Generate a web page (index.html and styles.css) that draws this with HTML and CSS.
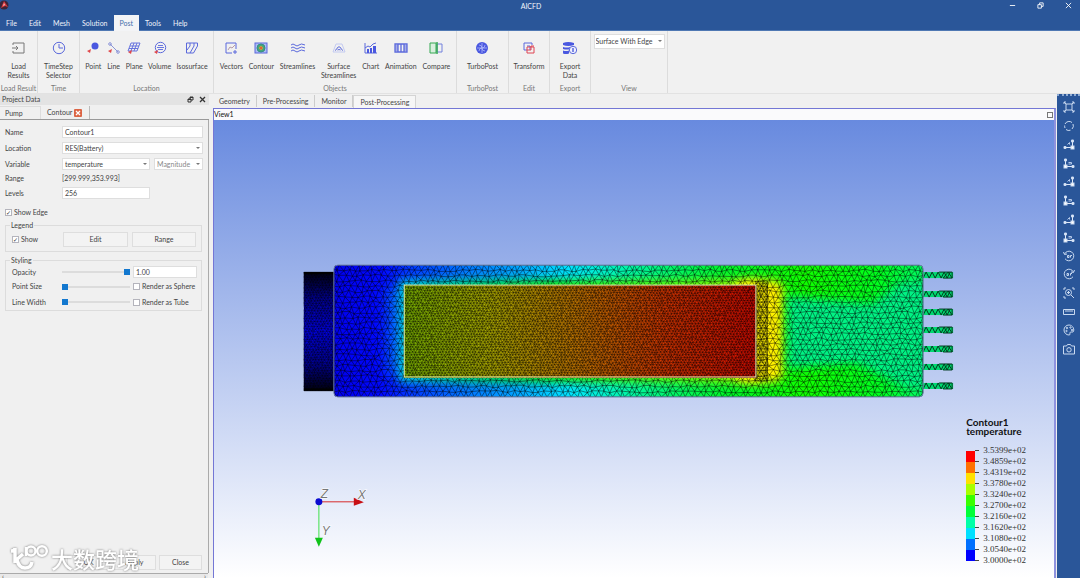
FILE: index.html
```html
<!DOCTYPE html>
<html lang="en">
<head>
<meta charset="utf-8">
<title>AICFD</title>
<link rel="stylesheet" href="styles.css">
</head>
<body>
<svg class="defs" aria-hidden="true">
  <symbol id="axis-r" viewBox="0 0 12 12"><path d="M9.500 2v7.500H2" fill="none" stroke="#dfe9f8"/><path d="M8.500 2h2v2h-2zM1 8.500h2v2H1z" fill="#e8f0fb"/><rect x="8" y="8" width="3" height="3" fill="#fff"/><path d="M4.500 6.500l2-2v2" fill="none" stroke="#b4c9ea"/></symbol>
  <symbol id="axis-l" viewBox="0 0 12 12"><path d="M2.500 2v7.500H10" fill="none" stroke="#dfe9f8"/><path d="M1.500 2h2v2h-2zM9 8.500h2v2H9z" fill="#e8f0fb"/><rect x="1" y="8" width="3" height="3" fill="#fff"/><path d="M5.500 5.500h3v1.500h-3" fill="none" stroke="#b4c9ea"/></symbol>
</svg>

<header class="titlebar">
  <svg class="app-icon" viewBox="0 0 10 10"><circle cx="4" cy="5" r="4.500" fill="#3d2436"/><path d="M1 8 4 1l4 6-3-1z" fill="#d93a3f"/><path d="M3 6l1-3 1 2z" fill="#f4c6c8"/></svg>
  <h1 class="app-title">AICFD</h1>
  <div class="window-buttons">
    <button aria-label="Minimize"><svg viewBox="0 0 8 8"><path d="M1 4h6"/></svg></button>
    <button aria-label="Restore"><svg viewBox="0 0 8 8"><path d="M1 3h4v4H1zM3 3V1h4v4H5"/></svg></button>
    <button aria-label="Close"><svg viewBox="0 0 8 8"><path d="M1 1l6 6M7 1 1 7"/></svg></button>
  </div>
</header>
<nav class="menu">
  <a href="#file">File</a><a href="#edit">Edit</a><a href="#mesh">Mesh</a><a href="#solution">Solution</a><a href="#post" class="active">Post</a><a href="#tools">Tools</a><a href="#help">Help</a>
</nav>

<div class="ribbon">
  <section class="group g-load">
    <div class="tools"><button><svg viewBox="0 0 14 14"><path d="M2 4V2h11v10H2v-2M1 7h6M5 5l2 2-2 2" stroke="#777"/></svg>Load<br>Results</button></div>
    <h2>Load Result</h2>
  </section>
  <section class="group g-time">
    <div class="tools"><button><svg viewBox="0 0 14 14"><circle cx="7" cy="7" r="5.700"/><path d="M7 3v4h4"/></svg>TimeStep<br>Selector</button></div>
    <h2>Time</h2>
  </section>
  <section class="group g-location">
    <div class="tools">
      <button><svg viewBox="0 0 14 14"><circle cx="9" cy="5" r="3.500" fill="#4a58e0" stroke="none"/><path d="M1 10l4-2-1 4z" class="red"/></svg>Point</button>
      <button><svg viewBox="0 0 14 14"><path d="M3 3l8 8" stroke="#8b94d8"/><circle cx="3" cy="3" r="1.300" stroke="#8b94d8"/><circle cx="11" cy="11" r="1.300" stroke="#8b94d8"/><path d="M1 10l4-2-1 4z" class="red"/></svg>Line</button>
      <button><svg viewBox="0 0 14 14"><path d="M4 2h9l-3 8H1zM3 5h9M2 7.500h9M7 2l-3 8M10 2l-3 8" stroke-width=".9"/><path d="M1 11l4-2-1 4z" class="red"/></svg>Plane</button>
      <button><svg viewBox="0 0 14 14"><circle cx="7.500" cy="6.500" r="5.200"/><path d="M5 4.500h5M4 6.500h7M5 8.500h5" stroke-width=".9"/><path d="M1 11l4-2-1 4z" class="red"/></svg>Volume</button>
      <button><svg viewBox="0 0 14 14"><path d="M1.500 2h11v3l-4 7h-7zM5 2v3l-3 4M9 2v3l-4 7"/></svg>Isosurface</button>
    </div>
    <h2>Location</h2>
  </section>
  <section class="group g-objects">
    <div class="tools">
      <button><svg viewBox="0 0 14 14"><path d="M8 12H2V2h10v6M11 9v4M9 11h4"/><path d="M4 9l2-3 2 1 3-3" stroke="#b59aa8"/></svg>Vectors</button>
      <button><svg viewBox="0 0 14 14"><rect x="1" y="2" width="12" height="10" fill="#aebcf5"/><circle cx="7" cy="7" r="4" fill="#47a67a" stroke="#358f84"/><circle cx="7" cy="7" r="1.500" fill="#e54b35" stroke="#c9a145"/></svg>Contour</button>
      <button><svg viewBox="0 0 14 14"><path d="M0 4q2-2 4 0t4 0 6 0M0 7q2-2 4 0t4 0 6 0M0 10q2-2 4 0t4 0 6 0"/></svg>Streamlines</button>
      <button><svg viewBox="0 0 14 14"><path d="M4 3h6l3 8H1z" stroke="#c4cbf1"/><path d="M3 9.500q2-1 2.500-3 1.500-1.500 3 0 .5 2 2.500 3M5.500 9q1.500-1 3 0"/></svg>Surface<br>Streamlines</button>
      <button><svg viewBox="0 0 14 14"><path d="M1 2v10h12M1 7l3-2 2 1 3-3 3-1"/><path d="M3 8h2v4H3zM6 7h2v5H6zM9 5h3v7H9z" fill="#4a58e0" stroke="none"/></svg>Chart</button>
      <button><svg viewBox="0 0 14 14"><path d="M1 3h12v8H1zM4 3v8M10 3v8M7 3v8" stroke-width="1.300"/><path d="M1 5h3M1 7h3M1 9h3M10 5h3M10 7h3M10 9h3"/></svg>Animation</button>
      <button><svg viewBox="0 0 14 14"><path d="M8 3h5v8H8z" stroke="#7281dd"/><path d="M1 2h6v10H1z" fill="#d8efdd" stroke="#35a852"/><path d="M8 1v12" stroke="#35a852" stroke-width="1.500"/></svg>Compare</button>
    </div>
    <h2>Objects</h2>
  </section>
  <section class="group g-turbo">
    <div class="tools"><button><svg viewBox="0 0 14 14"><circle cx="7" cy="7" r="6" fill="#4a58e0" stroke="none"/><path d="M7 2v10M2 7h10M4 4q3 0 3 3t3 3M10 4q0 3-3 3t-3 3" stroke="#aeb6fa" stroke-width=".8"/></svg>TurboPost</button></div>
    <h2>TurboPost</h2>
  </section>
  <section class="group g-edit">
    <div class="tools"><button><svg viewBox="0 0 14 14"><path d="M5 9H2V2h8v2M5 5h3v4"/><path d="M5 6h7v6H5zM5 9h4V5h3" stroke="#df4552"/></svg>Transform</button></div>
    <h2>Edit</h2>
  </section>
  <section class="group g-export">
    <div class="tools"><button><svg viewBox="0 0 14 14"><path d="M0 2q5-2 11 0v2Q5 6 0 4zM0 6q4 1 7 0v2q-3 1-7 0zM0 9.500q3 1 6 0v3q-3 1-6 0z" fill="#4a58e0" stroke="none"/><circle cx="10" cy="9" r="3.700" fill="#eef0ff"/><path d="M10 7v4M9 8h2M9 10h2"/></svg>Export<br>Data</button></div>
    <h2>Export</h2>
  </section>
  <section class="group g-view">
    <div class="tools"><span class="select"><select aria-label="Display mode"><option>Surface With Edge</option></select></span></div>
    <h2>View</h2>
  </section>
</div>

<div class="workspace">
  <aside class="panel">
    <div class="panel-head"><h2>Project Data</h2>
      <button aria-label="Float"><svg viewBox="0 0 7 7"><path d="M1 3h3v3H1zM3 3V1h3v3H4M1 3.500h3M3 1.500h3"/></svg></button>
      <button aria-label="Close panel"><svg viewBox="0 0 7 7"><path d="M1 1l5 5M6 1 1 6" stroke-width="1.300"/></svg></button>
    </div>
    <div class="panel-tabs">
      <button class="tab">Pump</button>
      <button class="tab active">Contour <svg viewBox="0 0 8 8"><rect width="8" height="8" rx="1" fill="#dc6545"/><path d="M2 2l4 4M6 2 2 6" stroke="#fff" stroke-width="1.300"/></svg></button>
    </div>
    <form class="form">
      <div class="fields">
        <label for="name">Name</label><input id="name" class="wide" value="Contour1">
        <label for="loc">Location</label><span class="select wide"><select id="loc"><option>RES(Battery)</option></select></span>
        <label for="var">Variable</label><span class="select"><select id="var"><option>temperature</option></select></span><span class="select dim"><select aria-label="Component"><option>Magnitude</option></select></span>
        <span>Range</span><output class="wide">[299.999,353.993]</output>
        <label for="levels">Levels</label><input id="levels" value="256">
      </div>
      <label class="check edge"><input type="checkbox" checked>Show Edge</label>
      <fieldset class="legend-box"><legend>Legend</legend>
        <label class="check"><input type="checkbox" checked>Show</label><button type="button">Edit</button><button type="button">Range</button>
      </fieldset>
      <fieldset class="styling"><legend>Styling</legend>
        <label for="op">Opacity</label><input id="op" type="range" value="100"><input aria-label="Opacity value" value="1.00">
        <label for="ps">Point Size</label><input id="ps" type="range" value="0"><label class="check"><input type="checkbox">Render as Sphere</label>
        <label for="lw">Line Width</label><input id="lw" type="range" value="0"><label class="check"><input type="checkbox">Render as Tube</label>
      </fieldset>
      <div class="actions"><button type="button">OK</button><button type="button">Apply</button><button type="button">Close</button></div>
    </form>
    <div class="hscroll"><span>‹</span><span>›</span></div>
    <div class="watermark">
      <svg viewBox="0 0 40 28"><g fill="none" stroke="#fff" stroke-width="3.500"><path d="M2 7q4 0 4-3v15M6 17l8-7M8 16q2 8 8 8 6 0 7-6"/><path d="M17 3v9" stroke-width="2.500"/><circle cx="22" cy="7" r="4.500" stroke-width="2.500"/><circle cx="33" cy="7" r="4.800" stroke-width="2.500"/></g></svg>
      <span lang="zh">大数跨境</span>
    </div>
  </aside>

  <main class="main">
    <div class="doc-tabs"><button>Geometry</button><button>Pre-Processing</button><button>Monitor</button><button class="active">Post-Processing</button></div>
    <section class="view">
      <div class="view-head"><h2>View1</h2><button aria-label="Maximize view"></button></div>
      <div class="viewport">
        <svg class="scene" viewBox="214 120 841 458" preserveAspectRatio="xMidYMid meet">
          <defs>
            <linearGradient id="shell" gradientUnits="userSpaceOnUse" x1="334" y1="0" x2="923" y2="0">
              <stop offset="0" stop-color="#0000ed"/><stop offset=".08" stop-color="#0008ff"/><stop offset=".13" stop-color="#0038ff"/><stop offset=".22" stop-color="#0074ff"/><stop offset=".32" stop-color="#00a8ff"/><stop offset=".4" stop-color="#00e4ff"/><stop offset=".48" stop-color="#00f4b8"/><stop offset=".57" stop-color="#00f56c"/><stop offset=".66" stop-color="#00f52c"/><stop offset=".8" stop-color="#10ff00"/><stop offset=".93" stop-color="#00ff20"/><stop offset="1" stop-color="#00f860"/>
            </linearGradient>
            <linearGradient id="halo" gradientUnits="userSpaceOnUse" x1="395" y1="0" x2="790" y2="0">
              <stop offset="0" stop-color="#00c8f0"/><stop offset=".08" stop-color="#00d8b0"/><stop offset=".2" stop-color="#00dc60"/><stop offset=".4" stop-color="#10e400"/><stop offset=".75" stop-color="#70f800"/><stop offset="1" stop-color="#f0f000"/>
            </linearGradient>
            <linearGradient id="battery">
              <stop offset="0" stop-color="#7ab400"/><stop offset=".25" stop-color="#b0ac00"/><stop offset=".5" stop-color="#c47400"/><stop offset=".75" stop-color="#d43400"/><stop offset="1" stop-color="#d40c00"/>
            </linearGradient>
            <linearGradient id="plug" x2="0" y2="1">
              <stop offset="0" stop-color="#000010"/><stop offset=".2" stop-color="#00008c"/><stop offset=".5" stop-color="#0000e8"/><stop offset=".8" stop-color="#00008c"/><stop offset="1" stop-color="#000010"/>
            </linearGradient>
            <filter id="soft" x="-30%" y="-30%" width="160%" height="160%"><feGaussianBlur stdDeviation="4"/></filter>
            <filter id="softer" x="-30%" y="-30%" width="160%" height="160%"><feGaussianBlur stdDeviation="7"/></filter>
            <clipPath id="body-clip"><rect x="334" y="265" width="590" height="132" rx="4"/></clipPath>
            <clipPath id="core-clip"><rect x="404" y="285" width="353" height="93"/></clipPath>
          </defs>
          <rect x="304" y="272" width="30" height="119" fill="url(#plug)"/>
          <path class="mesh" data-mesh="304 272 334 391 3"/>
          <path d="M304 273h30M304 389.500h30" stroke="#000" stroke-width="2"/>
          <g id="pins"></g>
          <g clip-path="url(#body-clip)">
            <rect x="334" y="265" width="590" height="132" fill="url(#shell)"/>
            <rect x="388" y="288" width="40" height="86" fill="#0060ff" filter="url(#softer)"/>
            <rect x="399" y="280" width="363" height="102" fill="url(#halo)" filter="url(#soft)"/>
            <rect x="735" y="280" width="49" height="102" rx="10" fill="#fff000" filter="url(#soft)"/>
            <path d="M788 296l85 8 30-22h30v106h-24l-52-25-69 5z" fill="#00f284" filter="url(#soft)"/>
            <path class="mesh shell-mesh" data-mesh="334 265 924 397 6"/>
            <path class="mesh" data-mesh="756 281 768 381 3"/>
          </g>
          <rect x="334" y="265" width="590" height="132" rx="4" fill="none" stroke="#6b7ea8" stroke-width="1"/>
          <g clip-path="url(#core-clip)">
            <rect x="404" y="285" width="353" height="93" fill="url(#battery)"/>
            <path class="mesh core-mesh" data-mesh="404 285 757 378 3"/>
          </g>
          <rect x="404.500" y="285" width="352" height="92" fill="none" stroke="#e4eeb2" stroke-width="1"/>
          <g class="triad">
            <path d="M319 502h37" stroke="#d62a2a"/><path d="M354 498l10 4.500-10 3.500z" fill="#c80f14"/>
            <path d="M319 502v38" stroke="#3fe04a"/><path d="M315 538h8l-4 9z" fill="#10c31a"/>
            <circle cx="319" cy="502" r="3.500" fill="#0b0bd0"/>
            <text x="321" y="498">Z</text><text x="358" y="499">X</text><text x="322" y="535">Y</text>
          </g>
        </svg>
        <div class="color-legend">
          <h3>Contour1<br>temperature</h3>
          <div class="scale">
            <div class="bar"><i class="c1"></i><i class="c2"></i><i class="c3"></i><i class="c4"></i><i class="c5"></i><i class="c6"></i><i class="c7"></i><i class="c8"></i><i class="c9"></i><i class="c10"></i></div>
            <ol><li>3.5399e+02</li><li>3.4859e+02</li><li>3.4319e+02</li><li>3.3780e+02</li><li>3.3240e+02</li><li>3.2700e+02</li><li>3.2160e+02</li><li>3.1620e+02</li><li>3.1080e+02</li><li>3.0540e+02</li><li>3.0000e+02</li></ol>
          </div>
        </div>
      </div>
    </section>
  </main>

  <div class="side-tools">
    <div class="side-list" role="toolbar" aria-label="View tools">
      <button aria-label="Fit"><svg viewBox="0 0 12 12"><path d="M3 3h6v6H3zM1 3V1h2M9 1h2v2M11 9v2H9M3 11H1V9M1 1l2 2M11 1 9 3M11 11 9 9M1 11l2-2"/></svg></button>
      <button aria-label="Rotate"><svg viewBox="0 0 12 12"><path d="M2 4a4.500 4.500 0 0 1 7-1.500M10 4a4.500 4.500 0 0 1-1 5M7.500 10.200A4.500 4.500 0 0 1 3 9.500M2 8a4.500 4.500 0 0 1-.3-2.500"/></svg></button>
      <button aria-label="View +X"><svg><use href="#axis-r"/></svg></button>
      <button aria-label="View -X"><svg><use href="#axis-l"/></svg></button>
      <button aria-label="View +Y"><svg><use href="#axis-r"/></svg></button>
      <button aria-label="View -Y"><svg><use href="#axis-l"/></svg></button>
      <button aria-label="View +Z"><svg><use href="#axis-r"/></svg></button>
      <button aria-label="View -Z"><svg><use href="#axis-l"/></svg></button>
      <button aria-label="Rotate left"><svg viewBox="0 0 12 12"><path d="M1.600 4A4.800 4.800 0 1 1 2 8.700M.5 2l1 2.500L4 4M4.500 7.500v-2h1.500v2zM7.500 7.500v-2H9"/></svg></button>
      <button aria-label="Rotate right"><svg viewBox="0 0 12 12"><path d="M10.400 4A4.800 4.800 0 1 0 10 8.700M11.500 2l-1 2.500L8 4M4 7.500v-2h1.500v2zM7.500 7.500v-2H9"/></svg></button>
      <button aria-label="Zoom area"><svg viewBox="0 0 12 12"><path d="M1 3V1h2M9 1h2v2M3 11H1V9M8 8l3 3M4 5.500h3M5.500 4v3"/><circle cx="5.500" cy="5.500" r="3"/></svg></button>
      <button aria-label="Ruler"><svg viewBox="0 0 12 12"><path d="M.5 3.500h11v5H.5zM3 4v2M5 4v2M7 4v2M9 4v2"/></svg></button>
      <button aria-label="Palette"><svg viewBox="0 0 12 12"><path d="M6 1a5 5 0 1 0 0 10c2 0 0-2 1.500-3H10c2-2 0-7-4-7z"/><circle cx="4" cy="4" r=".7"/><circle cx="7.500" cy="3.500" r=".7"/><circle cx="3.500" cy="7" r=".7"/><circle cx="9" cy="6" r=".7"/></svg></button>
      <button aria-label="Screenshot"><svg viewBox="0 0 12 12"><path d="M.5 3h3l1-1.500h3l1 1.500h3v8H.5z"/><circle cx="6" cy="6.800" r="2.200"/></svg></button>
    </div>
  </div>
</div>
<script src="mesh.js"></script>
</body>
</html>
```
FILE: styles.css
```css
* { box-sizing: border-box; }
body { margin: 0; height: 100vh; display: flex; flex-direction: column; overflow: hidden; background: #f0f0f0; color: #444; font: 7px/9px Lato, "Liberation Sans", sans-serif; }
h1, h2, h3 { margin: 0; font: inherit; }
button, input, select, output { font: inherit; color: inherit; margin: 0; }
button { padding: 0; border: 0; background: none; white-space: nowrap; }
svg { display: block; }
.defs { position: absolute; width: 0; height: 0; }

.titlebar { flex: none; height: 15px; display: grid; grid-template-columns: 1fr auto 1fr; align-items: start; background: #2a5699; color: #f2f6fc; }
.app-icon { width: 10px; height: 10px; }
.app-title { padding: 2px 18px 0 0; }
.window-buttons { display: flex; justify-content: flex-end; gap: 21px; padding: 2px 8px 0 0; }
.window-buttons svg { width: 7px; height: 7px; fill: none; stroke: #fff; }
.menu { flex: none; height: 16px; display: flex; background: #2a5699; border-bottom: 1px solid #4f78b3; }
.menu a { padding: 4px 6px; height: 16px; color: #eef3fb; text-decoration: none; }
.menu .active { background: #f3f4f6; color: #4470aa; }

.ribbon { flex: none; height: 63px; display: flex; border-bottom: 1px solid #e2e2e2; background: #f1f1f1; }
.group { flex: none; display: flex; flex-direction: column; justify-content: space-between; border-right: 1px solid #dcdcdc; padding-top: 10px; white-space: nowrap; }
.group h2 { text-align: center; color: #777; line-height: 10px; }
.g-load { width: 38px; }
.g-time { width: 42px; }
.g-location { width: 134px; }
.g-objects { width: 243px; }
.g-turbo { width: 52px; }
.g-edit { width: 41px; }
.g-export { width: 41px; }
.g-view { width: 77px; padding-top: 3px; }
.tools { display: flex; justify-content: space-evenly; align-items: flex-start; }
.tools button { text-align: center; }
.tools button svg { width: 14px; height: 14px; margin: 0 auto 7px; fill: none; stroke: #5b69dc; }
.tools .red { fill: #e0484b; stroke: none; }

.select { position: relative; display: block; }
.select select { appearance: none; display: block; width: 100%; height: 12px; padding: 0 10px 0 2px; border: 1px solid #dedede; border-radius: 0; background: #fff; line-height: 9px; }
.select::after { content: ""; position: absolute; right: 3px; top: 5px; border: 2px solid transparent; border-top-color: #777; pointer-events: none; }
.select.dim { color: #888; }
.select.dim select { padding-right: 6px; }
.g-view .select { width: 71px; }
.g-view .select select { height: 15px; padding-left: 1px; }
.g-view .select::after { top: 6px; }

.workspace { flex: 1; min-height: 0; display: flex; }
.panel { position: relative; flex: none; width: 209px; margin-right: 4px; display: flex; flex-direction: column; }
.panel-head { display: flex; align-items: center; gap: 5px; height: 11px; padding: 0 3px 0 2px; background: #e3e3e3; }
.panel-head h2 { flex: 1; }
.panel-head svg { width: 7px; height: 7px; fill: none; stroke: #333; stroke-width: 1; }
.panel-tabs { display: flex; height: 15px; padding-top: 1px; border-bottom: 1px solid #999; }
.tab { display: flex; align-items: center; gap: 2px; padding: 0 6px; width: 49px; height: 13px; }
.panel-tabs .tab:first-child { width: 41px; padding-left: 5px; border-top: 1px solid #ddd; border-right: 1px solid #ddd; }
.tab svg { width: 8px; height: 8px; }
.tab.active { border-right: 1px solid #bbb; }
.form { flex: 1; display: flex; flex-direction: column; border-right: 1px solid #aaa; padding: 6px 6px 3px 5px; }
.fields { display: grid; grid-template-columns: 53px 88px 49px; column-gap: 4px; grid-template-rows: 12px 12px 12px 9px 12px; row-gap: 4px; align-items: center; }
.fields label, .fields > span:not(.select) { grid-column: 1; }
.fields .wide { grid-column: 2 / 4; }
input:not([type]) { width: 100%; min-width: 0; height: 12px; border: 1px solid #dedede; background: #fff; padding: 0 2px; outline: 0; }
.check { display: flex; align-items: center; gap: 2px; white-space: nowrap; }
.check input { flex: none; appearance: none; width: 7px; height: 7px; border: 1px solid #b4b4bc; background: #fff; }
.check input:checked::after { content: "✓"; display: block; font: bold 6px/5px "DejaVu Sans", sans-serif; color: #333; text-align: center; }
.edge { margin-top: 9px; }
fieldset { margin: 0; min-width: 0; border: 1px solid #dcdcdc; display: grid; align-items: center; column-gap: 4px; }
legend { padding: 0 1px; margin-left: -2px; line-height: 9px; }
.legend-box { margin-top: 4px; padding: 2px 5px 4px 6px; grid-template-columns: 47px 65px 64px; }
.legend-box button, .actions button { height: 15px; border: 1px solid #dedede; background: #f3f3f3; }
.styling { margin-top: 4px; padding: 1px 5px 1px 6px; grid-template-columns: 47px 68px 64px; grid-template-rows: 12px 15px 14px; row-gap: 1px; column-gap: 3px; }
input[type="range"] { appearance: none; width: 100%; height: 7px; background: linear-gradient(#dcdcdc, #dcdcdc) center / 100% 2px no-repeat; }
input[type="range"]::-webkit-slider-thumb { appearance: none; width: 6px; height: 6px; background: #1378cf; }
.actions { margin-top: auto; display: grid; grid-template-columns: 43px 43px 43px; gap: 3px; justify-content: end; }
.hscroll { height: 5px; margin-right: 1px; border-top: 1px solid #aaa; display: flex; justify-content: space-between; align-items: center; line-height: 4px; padding: 0 2px; background: #e9e9e9; }
.watermark { position: absolute; left: 9px; bottom: 5px; display: flex; align-items: center; gap: 2px; filter: drop-shadow(0 0 1px #777); color: #fff; font: 500 22px/30px "Noto Sans CJK SC", sans-serif; pointer-events: none; }
.watermark svg { width: 40px; height: 28px; }

.main { flex: 1; min-width: 0; display: flex; flex-direction: column; }
.doc-tabs { display: flex; height: 14px; padding-top: 1px; }
.doc-tabs button { padding: 0 6px; border-right: 1px solid #ccc; height: 12px; }
.doc-tabs .active { background: #f6f6f6; border: 1px solid #d4d4d4; border-bottom: 0; height: 13px; }
.view { flex: 1; min-height: 0; display: flex; flex-direction: column; border: 1px solid #7477d5; border-right: 2px solid #8e92de; border-bottom: 0; }
.view-head { display: flex; align-items: center; justify-content: space-between; height: 11px; padding-right: 1px; background: #fafafc; color: #111; }
.view-head button { width: 6px; height: 6px; border: 1px solid #777; }
.viewport { position: relative; flex: 1; min-height: 0; background: linear-gradient(#688adf, #fff); }
.scene { width: 100%; height: 100%; }
.mesh { fill: none; stroke: #000; stroke-width: .5; opacity: .7; }
.shell-mesh { stroke-width: .6; opacity: .75; }
.core-mesh { stroke-width: .6; opacity: .7; }
.pin { fill: #00d870; }
.pin-mesh { fill: none; stroke: #033b20; stroke-width: 1; }
.triad text { font: italic 12px "Liberation Sans", sans-serif; fill: #777; paint-order: stroke; stroke: #fff; stroke-width: 1px; }
.color-legend { position: absolute; right: 28px; bottom: 12px; color: #333; font: 9px/11px "Liberation Serif", serif; }
.color-legend h3 { font: bold 10px/9px Lato, sans-serif; color: #111; margin-bottom: 9px; }
.scale { display: flex; }
.bar { width: 9px; padding-top: 6px; }
.bar i { display: block; height: 11px; }
.c1 { background: #f00; } .c2 { background: #ff7000; } .c3 { background: #ffe000; } .c4 { background: #a8ff00; } .c5 { background: #38ff00; }
.c6 { background: #00ff38; } .c7 { background: #00ffa8; } .c8 { background: #00e0ff; } .c9 { background: #0070ff; } .c10 { background: #00f; }
.scale ol { list-style: none; margin: 0; padding: 0; }
.scale li { display: flex; align-items: center; gap: 4px; }
.scale li::before { content: ""; width: 4px; height: 1px; background: #444; }

.side-tools { flex: none; width: 23px; margin-left: 1px; background: #2a5699; border-top: 2px dotted #8eabd4; }
.side-list { height: 254px; margin-top: 5px; display: flex; flex-direction: column; align-items: center; justify-content: space-between; }
.side-list svg { width: 12px; height: 12px; fill: none; stroke: #c9d9f0; stroke-width: 1; }
```
FILE: mesh.js
```js
// Builds jittered triangle grids for every path that has a data-mesh box.
let seed = 7;
function rnd() {
  seed = (seed * 16807) % 2147483647;
  return seed / 2147483647;
}

function meshPath(x0, y0, x1, y1, step) {
  const cols = Math.round((x1 - x0) / step);
  const rows = Math.round((y1 - y0) / (step * 0.87));
  const dx = (x1 - x0) / cols;
  const dy = (y1 - y0) / rows;
  const pts = [];
  for (let r = 0; r <= rows; r++) {
    const line = [];
    for (let c = 0; c <= cols + 1; c++) {
      const x = x0 + (c - (r % 2 ? 0.5 : 0)) * dx + (rnd() - 0.5) * step * 0.45;
      const edge = r === 0 || r === rows;
      const y = y0 + r * dy + (edge ? 0 : (rnd() - 0.5) * step * 0.45);
      line.push(Math.min(x1, Math.max(x0, x)).toFixed(1) + " " + y.toFixed(1));
    }
    pts.push(line);
  }
  let d = "";
  for (let r = 0; r <= rows; r++) {
    d += "M" + pts[r].join("L");
    if (r === rows) break;
    for (let c = 0; c <= cols + 1; c++) {
      d += "M" + pts[r][c] + "L" + pts[r + 1][c];
      const n = r % 2 ? c - 1 : c + 1;
      if (pts[r + 1][n]) d += "M" + pts[r][c] + "L" + pts[r + 1][n];
    }
  }
  return d;
}

document.querySelectorAll("[data-mesh]").forEach((path) => {
  path.setAttribute("d", meshPath(...path.dataset.mesh.split(" ").map(Number)));
});

const pins = document.getElementById("pins");
[275, 294, 312, 330, 349, 367, 386].forEach((y) => {
  let d = `M924 ${y + 3}`;
  for (let x = 927, up = true; x <= 951; x += 3, up = !up) {
    d += `L${x} ${up ? y - 3 : y + 3}`;
  }
  d += `M944 ${y - 3}h9v6h-9l5-6 4 6M940 ${y - 3}h4`;
  pins.innerHTML += `<rect class="pin" x="923" y="${y - 3}" width="31" height="6"/><path class="pin-mesh" d="${d}"/>`;
});
```
